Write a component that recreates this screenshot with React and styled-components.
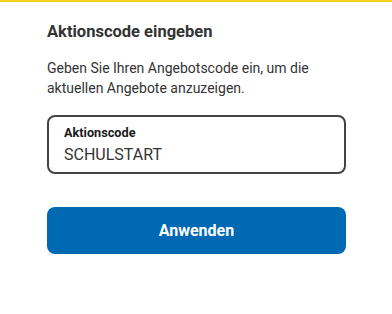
import React from 'react';
import styled, { createGlobalStyle } from 'styled-components';

const GlobalStyle = createGlobalStyle`
  body {
    margin: 0;
    background: #ffffff;
    font-family: Roboto, 'Liberation Sans', sans-serif;
  }
`;

const Page = styled.div`
  width: 392px;
  min-height: 314px;
  border-top: 2px solid #f6d21e;
  box-sizing: border-box;
`;

const Panel = styled.div`
  display: flex;
  flex-direction: column;
  padding: 18px 46px 0 47px;
`;

const Title = styled.h2`
  margin: 0;
  font-size: 16.5px;
  line-height: 24px;
  font-weight: 700;
  color: #333333;
`;

const Description = styled.p`
  margin: 14px 0 0;
  font-size: 14px;
  line-height: 20px;
  color: #333333;
`;

const Field = styled.label`
  display: flex;
  flex-direction: column;
  margin-top: 17px;
  height: 59px;
  box-sizing: border-box;
  padding: 8px 15px 0;
  border: 2px solid #444444;
  border-radius: 8px;
`;

const FieldLabel = styled.span`
  font-size: 12.7px;
  line-height: 16px;
  font-weight: 700;
  color: #1a1a1a;
`;

const FieldInput = styled.input`
  border: none;
  outline: none;
  padding: 0;
  margin-top: 3px;
  font-family: inherit;
  font-size: 16px;
  line-height: 22px;
  color: #333333;
  background: transparent;
`;

const Button = styled.button`
  margin-top: 33px;
  height: 47px;
  border: none;
  border-radius: 8px;
  background: #0069b4;
  color: #ffffff;
  font-family: inherit;
  font-size: 16px;
  font-weight: 700;
  cursor: pointer;
`;

const App = () => (
  <Page>
    <GlobalStyle />
    <Panel>
      <Title>Aktionscode eingeben</Title>
      <Description>
        Geben Sie Ihren Angebotscode ein, um die aktuellen Angebote anzuzeigen.
      </Description>
      <Field>
        <FieldLabel>Aktionscode</FieldLabel>
        <FieldInput defaultValue="SCHULSTART" />
      </Field>
      <Button>Anwenden</Button>
    </Panel>
  </Page>
);

export default App;
